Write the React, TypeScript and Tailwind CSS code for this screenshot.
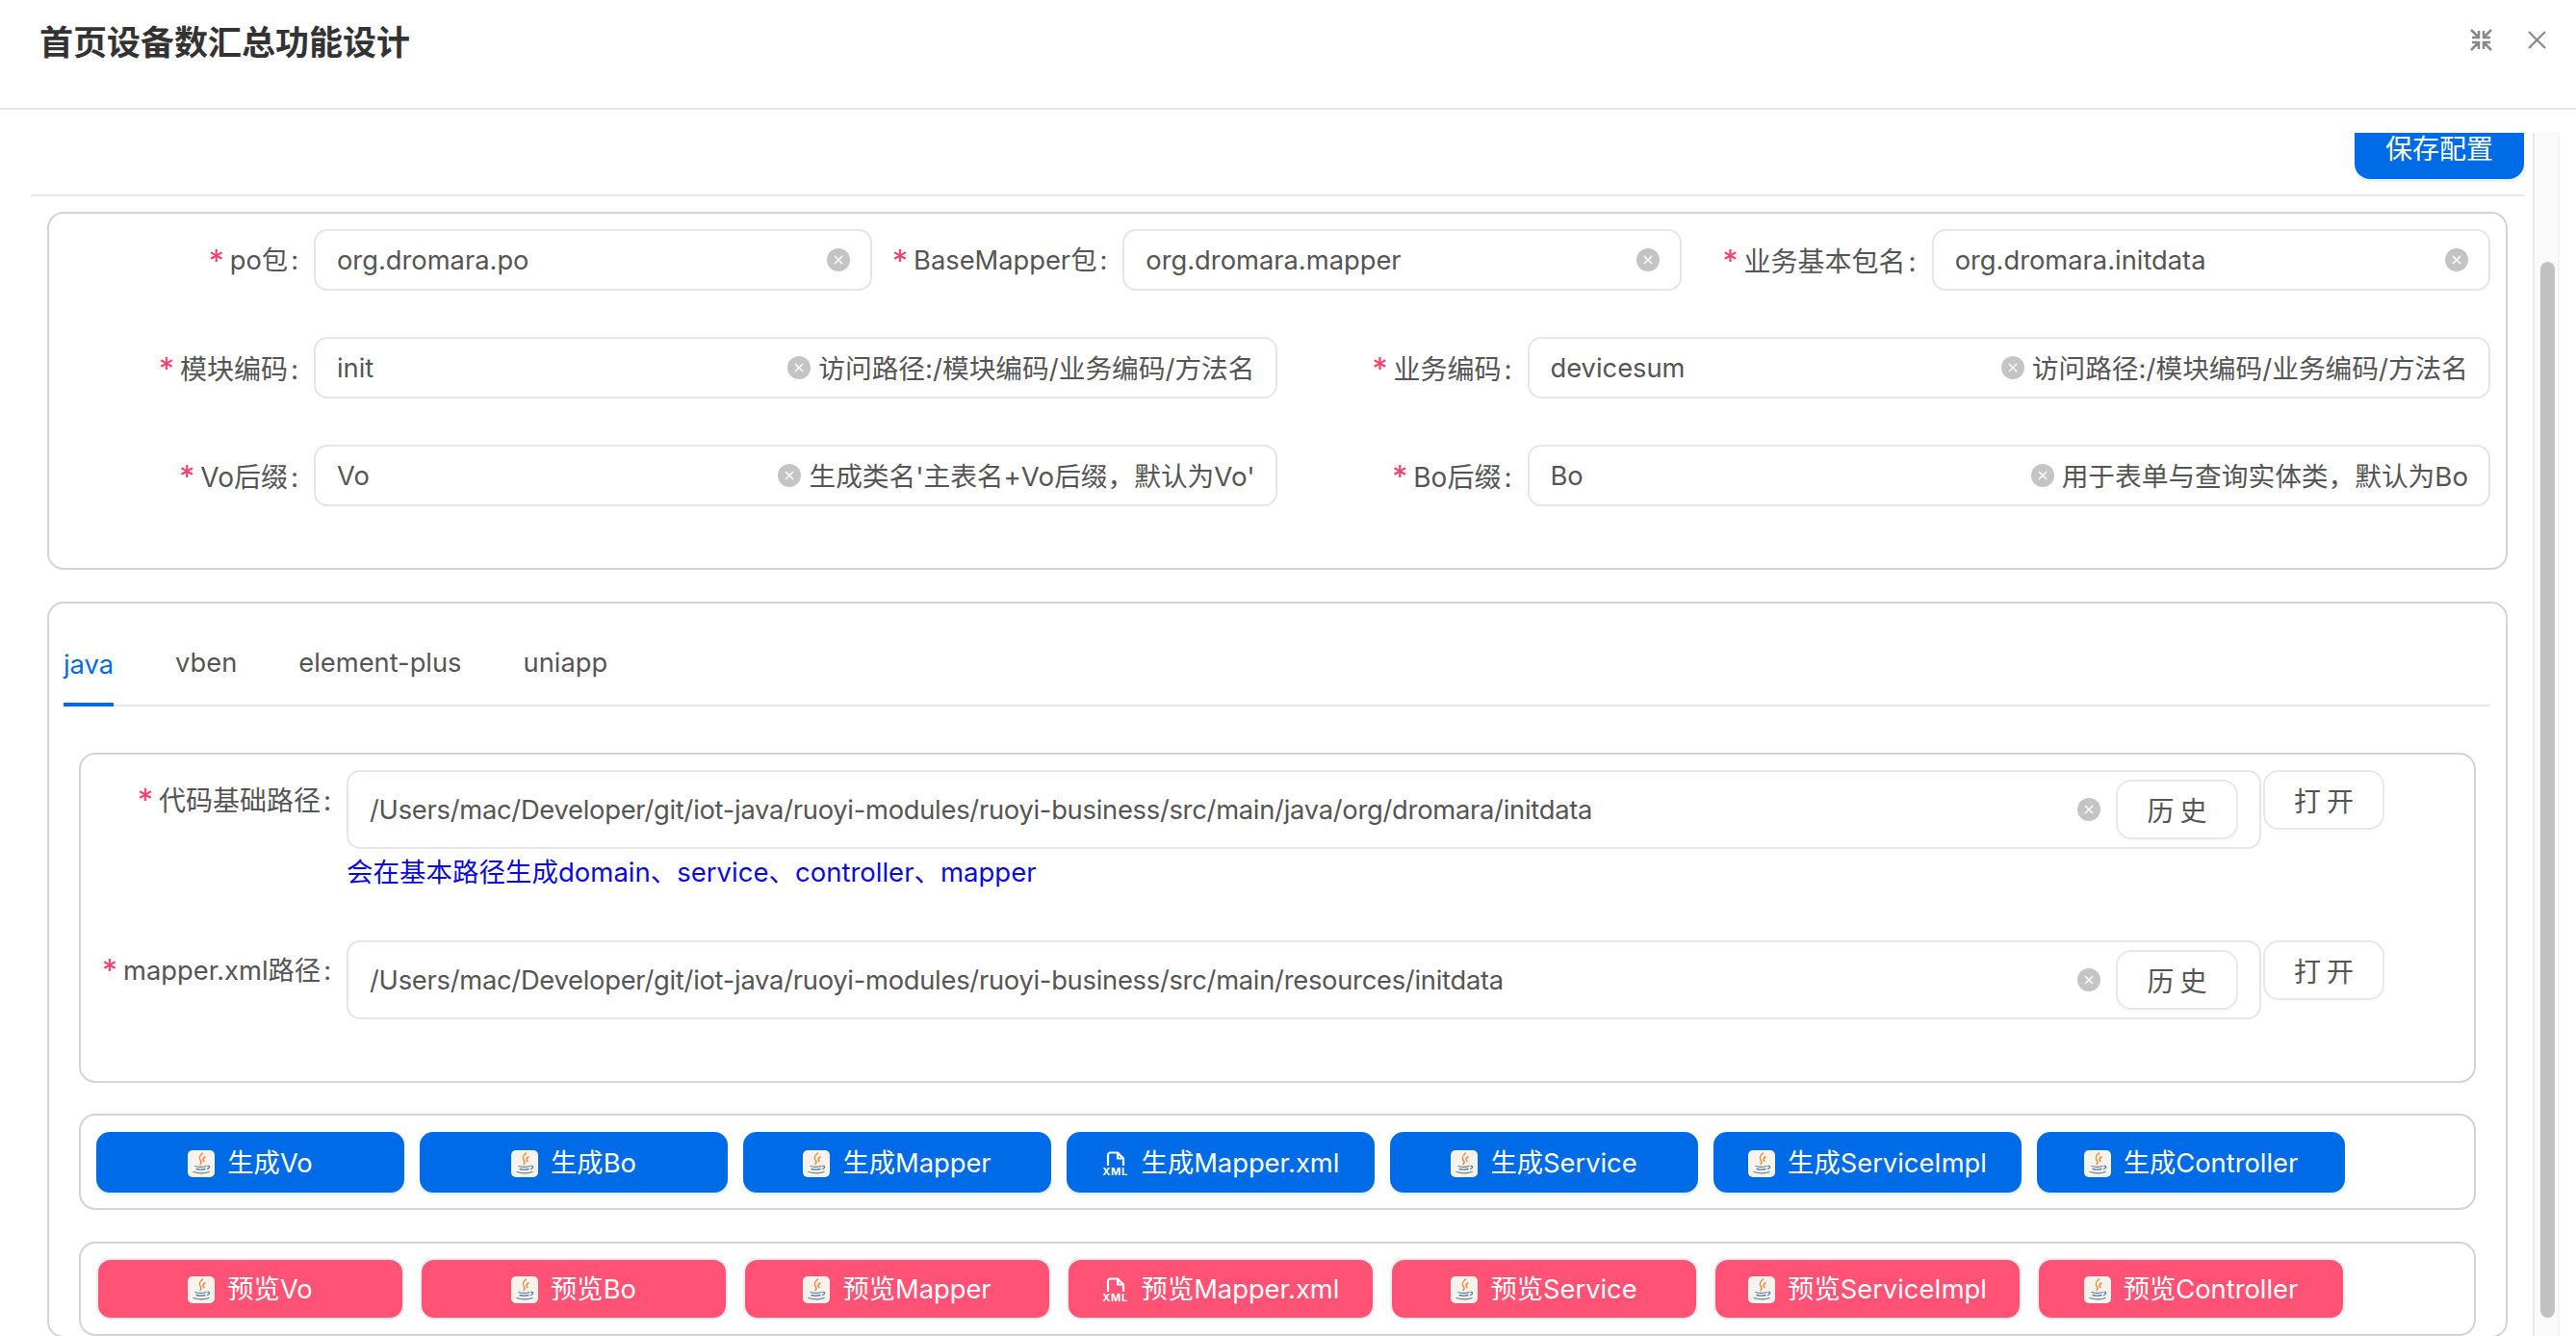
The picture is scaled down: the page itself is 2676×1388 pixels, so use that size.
const font = "font-['Inter','Noto_Sans_CJK_SC',sans-serif]";

function Clear() {
  return (
    <span className="flex h-6 w-6 shrink-0 items-center justify-center rounded-full bg-[#c4c4c4]">
      <svg width="10" height="10" viewBox="0 0 10 10" fill="none" stroke="#ffffff" strokeWidth="1.500">
        <path d="M1 1l8 8M9 1l-8 8" />
      </svg>
    </span>
  );
}

function Input({ value, hint }: { value: string; hint?: string }) {
  return (
    <div className="flex h-[64px] min-w-0 flex-1 items-center rounded-[14px] border-2 border-[#e6e6e6] pl-[22px] pr-[21px]">
      <span className="min-w-0 flex-1 truncate pt-[3px]">{value}</span>
      <span className="flex items-center gap-[8px]">
        <Clear />
        {hint && <span className="whitespace-nowrap pt-[3px] text-[27.7px]">{hint}</span>}
      </span>
    </div>
  );
}

function Field({ label, value, hint, latin }: { label: string; value: string; hint?: string; latin?: boolean }) {
  return (
    <div className="flex items-center">
      <Label text={label} className={latin ? "w-[260px] pt-[3px]" : "w-[260px] pt-[3px] text-[28px]"} />
      <Input value={value} hint={hint} />
    </div>
  );
}

function Label({ text, className }: { text: string; className: string }) {
  return (
    <label className={`flex h-[64px] shrink-0 items-center justify-end whitespace-nowrap pr-[16px] ${className}`}>
      <span className="mr-[6px] text-[32px] leading-[32px] text-[#ff3d6e]">*</span>
      {text}
      <span className="ml-[3px]">:</span>
    </label>
  );
}

function PathField({ label, value, help, latin }: { label: string; value: string; help?: string; latin?: boolean }) {
  return (
    <div className="flex items-start">
      <Label text={label} className={latin ? "w-[276px]" : "w-[276px] text-[28px]"} />
      <div className="w-[1989px] shrink-0">
        <div className="flex h-[82px] items-center rounded-[14px] border-2 border-[#e6e6e6] pl-[22px] pr-[22px]">
          <span className="min-w-0 flex-1 truncate pt-[3px] tracking-[-0.25px]">{value}</span>
          <Clear />
          <button className="ml-[16px] h-[62px] w-[127px] rounded-[16px] border-2 border-[#e8e8e8] pl-[6px] pt-[3px] text-[28px] tracking-[6px] shadow-[0_3px_0_rgba(0,0,0,0.02)]">
            历史
          </button>
        </div>
        {help && <div className="mt-[6px] text-[27.5px] leading-[36px] text-[#0a0adf]">{help}</div>}
      </div>
      <button className="ml-[2px] h-[62px] w-[126px] rounded-[16px] border-2 border-[#e8e8e8] pl-[6px] pt-[3px] text-[28px] tracking-[6px] shadow-[0_3px_0_rgba(0,0,0,0.02)]">
        打开
      </button>
    </div>
  );
}

function JavaIcon() {
  return (
    <svg width="28" height="28" viewBox="0 0 28 28" className="shrink-0">
      <rect width="28" height="28" rx="5" fill="#f5f3ec" />
      <path d="M15.500 3c-4 3.500-4 5.500-2 8 1 1.500.5 2.500-.5 3.500M18 7c-2.500 1.500-2.500 3-1 4.500" fill="none" stroke="#ee8a3c" strokeWidth="1.500" strokeLinecap="round" />
      <path d="M8 16.500c3 1 8 1 11 0M9 19.500c3 .8 6 .8 9 0M6 22.500c5 1.500 12 1.500 16 0M21 16.500c2-.5 2.500 2-.5 3" fill="none" stroke="#5c7f9e" strokeWidth="1.300" strokeLinecap="round" />
    </svg>
  );
}

function XmlIcon() {
  return (
    <span className="flex w-[28px] shrink-0 flex-col items-center">
      <svg width="20" height="16" viewBox="0 0 20 16">
        <path d="M2 15V4a2.500 2.500 0 0 1 2.500-2.500h7.500L18 7.500V15M12 2v5.500h6" fill="none" stroke="#ffffff" strokeWidth="2.200" strokeLinejoin="round" />
      </svg>
      <span className="mt-[1px] text-[11px] font-bold leading-[9px] tracking-[0.7px]">XML</span>
    </span>
  );
}

function ActionButton({ name, pink }: { name: string; pink?: boolean }) {
  const prefix = pink ? "预览" : "生成";
  return (
    <button
      className={
        pink
          ? "flex h-[64px] w-[320px] items-center justify-center gap-[13px] rounded-[15px] border-2 border-[#ececec] bg-[#ff5274] pt-[2px] text-white"
          : "flex h-[63px] w-[320px] items-center justify-center gap-[13px] rounded-[14px] bg-[#006be6] pt-[4px] text-white shadow-[0_3px_0_rgba(5,145,255,0.1)]"
      }
    >
      {name === "Mapper.xml" ? <XmlIcon /> : <JavaIcon />}
      <span>
        {prefix}
        {name}
      </span>
    </button>
  );
}

const names = ["Vo", "Bo", "Mapper", "Mapper.xml", "Service", "ServiceImpl", "Controller"];

export default function App() {
  return (
    <div className={`flex h-[1388px] w-[2676px] flex-col overflow-hidden bg-white text-[27.3px] text-[#555555] ${font}`}>
      <header className="flex h-[114px] shrink-0 items-start justify-between border-b-2 border-[#e8e8e8] pl-[41px] pr-[31px]">
        <h1 className="mt-[21px] text-[35px] font-semibold leading-[46px] text-[#333333]">首页设备数汇总功能设计</h1>
        <div className="mt-[30px] flex items-center gap-[37px]">
          <svg width="23" height="23" viewBox="0 0 23 23" fill="none" stroke="#888888" strokeWidth="2.500">
            <path d="M1 1l7.500 7.500M9 2v7H2M22 1l-7.500 7.500M14 2v7h7M1 22l7.500-7.500M9 21v-7H2M22 22l-7.500-7.500M14 21v-7h7" />
          </svg>
          <svg width="19" height="19" viewBox="0 0 19 19" fill="none" stroke="#888888" strokeWidth="2.200">
            <path d="M1 1l17 17M18 1L1 18" />
          </svg>
        </div>
      </header>

      <div className="mt-[24px] flex min-h-0 flex-1 pl-[32px]">
        <main className="h-full w-[2590px] shrink-0 overflow-hidden">
          <div className="-mt-[18px]">
            <div className="flex h-[84px] justify-end border-b-2 border-[#e8e8e8]">
              <button className="h-[66px] w-[176px] rounded-[16px] bg-[#006be6] pt-[3px] text-[28px] text-white shadow-[0_3px_0_rgba(5,145,255,0.1)]">
                保存配置
              </button>
            </div>

            <section className="ml-[17px] mr-[17px] mt-[16px] rounded-[17px] border-2 border-[#d4d4d4] pb-[64px] pl-[15px] pr-[16px] pt-[16px]">
              <div className="grid grid-cols-3">
                <Field latin label="po包" value="org.dromara.po" />
                <Field latin label="BaseMapper包" value="org.dromara.mapper" />
                <Field label="业务基本包名" value="org.dromara.initdata" />
              </div>
              <div className="mt-[48px] grid grid-cols-2">
                <Field label="模块编码" value="init" hint="访问路径:/模块编码/业务编码/方法名" />
                <Field label="业务编码" value="devicesum" hint="访问路径:/模块编码/业务编码/方法名" />
              </div>
              <div className="mt-[48px] grid grid-cols-2">
                <Field label="Vo后缀" value="Vo" hint="生成类名'主表名+Vo后缀，默认为Vo'" />
                <Field label="Bo后缀" value="Bo" hint="用于表单与查询实体类，默认为Bo" />
              </div>
            </section>

            <section className="ml-[17px] mr-[17px] mt-[33px] rounded-[17px] border-2 border-[#d4d4d4] pl-[15px] pr-[16px]">
              <nav className="flex h-[107px] items-end gap-[64px] border-b-2 border-[#e8e8e8]">
                <span className="-mb-[2px] flex h-[72px] items-start border-b-[4px] border-[#006be6] pt-[9px] text-[#006be6]">java</span>
                <span className="flex h-[72px] items-start pt-[9px]">vben</span>
                <span className="flex h-[72px] items-start pt-[9px]">element-plus</span>
                <span className="flex h-[72px] items-start pt-[9px]">uniapp</span>
              </nav>

              <div className="ml-[16px] mr-[15px] mt-[48px] h-[343px] rounded-[17px] border-2 border-[#d4d4d4] pt-[16px]">
                <PathField
                  label="代码基础路径"
                  value="/Users/mac/Developer/git/iot-java/ruoyi-modules/ruoyi-business/src/main/java/org/dromara/initdata"
                  help="会在基本路径生成domain、service、controller、mapper"
                />
                <div className="mt-[53px]">
                  <PathField
                    latin
                    label="mapper.xml路径"
                    value="/Users/mac/Developer/git/iot-java/ruoyi-modules/ruoyi-business/src/main/resources/initdata"
                  />
                </div>
              </div>

              <div className="ml-[16px] mr-[15px] mt-[32px] flex h-[100px] items-center gap-[16px] rounded-[17px] border-2 border-[#d4d4d4] pl-[16px]">
                {names.map((n) => (
                  <ActionButton key={n} name={n} />
                ))}
              </div>

              <div className="ml-[16px] mr-[15px] mt-[33px] flex h-[98px] items-center gap-[16px] rounded-[17px] border-2 border-[#d4d4d4] pl-[16px]">
                {names.map((n) => (
                  <ActionButton key={n} name={n} pink />
                ))}
              </div>
            </section>
          </div>
        </main>

        <aside className="ml-[9px] h-full w-[28px] shrink-0 border-x-2 border-l-[#e8e8e8] border-r-[#f3f3f3] bg-[#fafafa] pl-[6px] pt-[134px]">
          <div className="h-[1097px] w-[15px] rounded-full bg-[#c1c1c1]" />
        </aside>
      </div>
    </div>
  );
}
